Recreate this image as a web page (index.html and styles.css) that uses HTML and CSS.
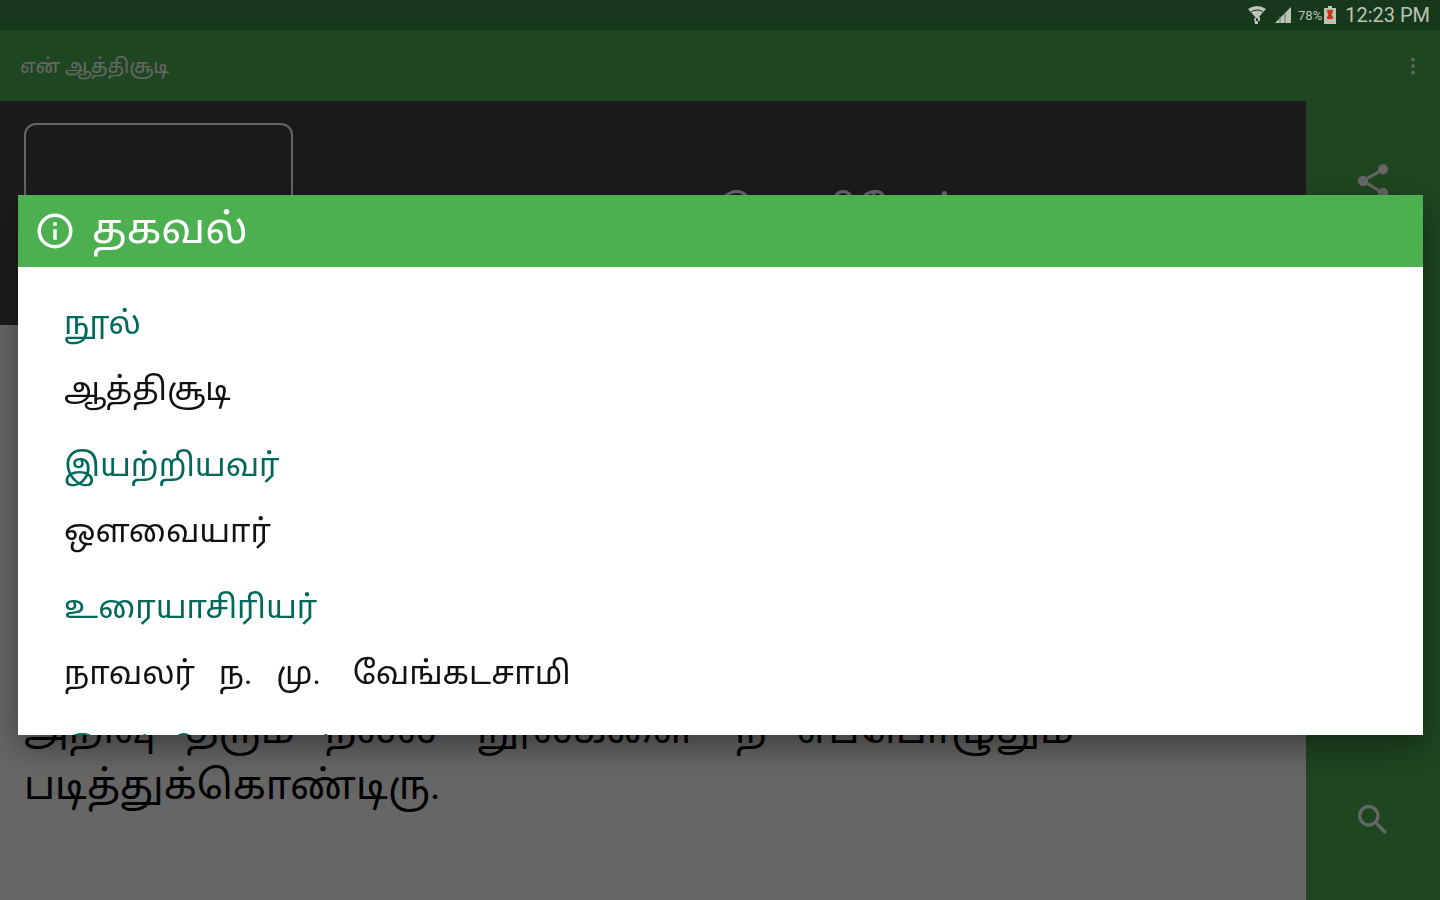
FILE: index.html
```html
<!DOCTYPE html>
<html lang="ta">
<head>
    <meta charset="UTF-8">
    <meta name="viewport" content="width=device-width, initial-scale=1.0">
    <title>என் ஆத்திசூடி</title>
    <link rel="stylesheet" href="styles.css">
</head>
<body>
    <div class="status-bar">
        <svg class="wifi" viewBox="0 0 20 20"><path d="M1 4Q10-2 19 4L10 14z" /><path class="wifi-gap" d="M4 7Q10 3 16 7" /><path d="M7 13h2v3h2v3H8zM11 12h2v4h-2z" /></svg>
        <svg class="signal" viewBox="0 0 16 16"><path d="M16 0v16H0z" /><path class="signal-gap" d="M5 9v7M10 5v11" /></svg>
        <span class="battery-level">78%</span>
        <svg class="battery" viewBox="0 0 12 18"><path d="M4 0h4v2h4v16H0V2h4z" /><path class="battery-cross" d="M4 4l4 9M8 4l-4 9" /></svg>
        <span class="time">12:23 PM</span>
    </div>

    <div class="app">
        <header class="toolbar">
            <h1>என் ஆத்திசூடி</h1>
            <button class="menu" aria-label="Menu">
                <svg viewBox="0 0 24 24"><circle cx="12" cy="5" r="2" /><circle cx="12" cy="12" r="2" /><circle cx="12" cy="19" r="2" /></svg>
            </button>
        </header>

        <div class="content">
            <main class="page">
                <section class="verse">
                    <div class="letter"></div>
                    <h2>ஓதுவ தொழியேல்</h2>
                </section>
                <p class="meaning">அறிவு   தரும்   நல்ல    நூல்களை    நீ   எப்பொழுதும் படித்துக்கொண்டிரு.</p>
            </main>

            <nav class="sidebar">
                <button aria-label="Share">
                    <svg viewBox="0 0 24 24"><path d="M18 16.1c-.8 0-1.4.3-2 .8l-7.100-4.200c.1-.2.1-.5.1-.7s0-.5-.1-.7L16 7.200c.5.5 1.200.8 2 .8 1.700 0 3-1.300 3-3s-1.300-3-3-3-3 1.300-3 3c0 .2 0 .5.1.7L8 9.800C7.500 9.300 6.800 9 6 9c-1.700 0-3 1.300-3 3s1.300 3 3 3c.8 0 1.500-.3 2-.8l7.100 4.200c-.1.2-.1.4-.1.600 0 1.600 1.300 2.900 3 2.900s3-1.300 3-2.900-1.300-2.900-3-2.900z" /></svg>
                </button>
                <button aria-label="Favourite">
                    <svg viewBox="0 0 24 24"><path d="M12 17l6 4-2-7 6-5h-7l-3-7-3 7H2l6 5-2 7z" /></svg>
                </button>
                <button aria-label="Info">
                    <svg viewBox="0 0 24 24"><path d="M11 7h2v2h-2zM11 11h2v6h-2z" /></svg>
                </button>
                <button aria-label="List">
                    <svg viewBox="0 0 24 24"><path d="M3 6h18v2H3zM3 11h18v2H3zM3 16h18v2H3z" /></svg>
                </button>
                <button aria-label="Search">
                    <svg viewBox="0 0 24 24"><path d="M15.500 14h-.8l-.3-.3A6.500 6.500 0 1 0 13.700 14.400l.3.3v.8l5 5 1.500-1.500zM9.500 14a4.500 4.500 0 1 1 0-9 4.500 4.500 0 0 1 0 9z" /></svg>
                </button>
            </nav>
        </div>
    </div>

    <div class="overlay">
        <div class="dialog" role="dialog" aria-modal="true" aria-labelledby="dialog-title">
            <div class="dialog-header">
                <svg viewBox="0 0 24 24"><path d="M11 7h2v2h-2zM11 11h2v6h-2z" /><circle cx="12" cy="12" r="9" /></svg>
                <h2 id="dialog-title">தகவல்</h2>
            </div>
            <dl class="dialog-body">
                <dt>நூல்</dt>
                <dd>ஆத்திசூடி</dd>
                <dt>இயற்றியவர்</dt>
                <dd>ஒளவையார்</dd>
                <dt>உரையாசிரியர்</dt>
                <dd>நாவலர்   ந.   மு.    வேங்கடசாமி</dd>
                <dt>இயற்றிய காலம்</dt>
            </dl>
        </div>
    </div>
</body>
</html>
```
FILE: styles.css
```css
* { box-sizing: border-box; }
body { margin: 0; height: 100vh; display: flex; flex-direction: column; overflow: hidden; font-family: Roboto, "Noto Sans Tamil", "Noto Sans", sans-serif; background: white; }
h1, h2, p, dl, dd { margin: 0; font-weight: normal; }
button { padding: 0; border: none; background: none; cursor: pointer; }
svg { display: block; fill: currentColor; }

.status-bar { position: relative; z-index: 2; flex: none; display: flex; align-items: center; justify-content: flex-end; height: 30px; padding: 0 10px; background: #17381a; color: #bcc4b8; }
.wifi { width: 20px; height: 20px; margin-right: 8px; }
.wifi-gap { fill: none; stroke: #17381a; }
.signal { width: 16px; height: 16px; margin-right: 7px; }
.signal-gap { stroke: #5c7460; }
.battery-level { font-size: 13px; margin-right: 2px; }
.battery { width: 12px; height: 18px; margin-right: 9px; }
.battery-cross { stroke: #d03018; stroke-width: 3; }
.time { font-size: 20px; }

.app { flex: 1; min-height: 0; display: flex; flex-direction: column; }
.toolbar { flex: none; display: flex; align-items: center; justify-content: space-between; height: 71px; padding: 0 16px 0 20px; background: #4caf50; color: #fff; }
.toolbar h1 { padding-top: 2px; font-size: 20px; }
.menu { color: #fff; }
.menu svg { width: 22px; height: 22px; }

.content { flex: 1; min-height: 0; display: flex; }
.page { flex: 1; min-width: 0; display: flex; flex-direction: column; }
.verse { flex: none; display: flex; align-items: center; gap: 24px; height: 224px; padding: 22px 24px; background: #444; color: #fff; }
.letter { width: 269px; height: 180px; border: 2px solid #fff; border-radius: 12px; }
.verse h2 { flex: 1; padding-right: 52px; text-align: center; font-size: 40px; }
.meaning { margin-top: auto; padding: 0 24px 86px; font-size: 40px; line-height: 56px; color: #000; white-space: pre-wrap; }

.sidebar { flex: none; width: 134px; display: flex; flex-direction: column; background: #4caf50; }
.sidebar button { flex: 1; display: flex; align-items: center; justify-content: center; color: #fff; }
.sidebar svg { width: 40px; height: 40px; }

.overlay { position: fixed; inset: 30px 0 0; z-index: 1; display: flex; align-items: center; padding: 0 17px 0 18px; background: rgba(0, 0, 0, 0.6); }
.dialog { flex: 1; display: flex; flex-direction: column; max-height: 540px; overflow: hidden; background: white; box-shadow: 0 12px 32px rgba(0, 0, 0, 0.4); }
.dialog-header { flex: none; display: flex; align-items: center; gap: 16px; height: 72px; padding: 0 16px; background: #4caf50; color: white; }
.dialog-header svg { width: 42px; height: 42px; }
.dialog-header circle { fill: none; stroke: currentColor; stroke-width: 2; }
.dialog-header h2 { font-size: 42px; }
.dialog-body { padding: 23px 46px; overflow: hidden; font-size: 32px; line-height: 66px; color: #111; }
.dialog-body dt { color: #00695c; }
.dialog-body dd { margin-bottom: 10px; white-space: pre-wrap; }
```
